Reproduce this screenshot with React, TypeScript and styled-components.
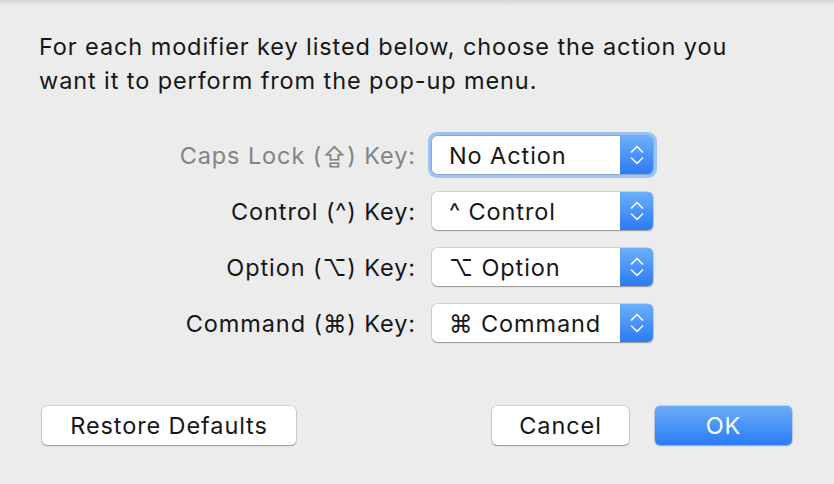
import React from "react";
import styled, { createGlobalStyle } from "styled-components";

const GlobalStyle = createGlobalStyle`
  html, body {
    margin: 0;
    padding: 0;
    background: #ececec;
  }
  body {
    font-family: Inter, "Liberation Sans", Arial, sans-serif;
    -webkit-font-smoothing: antialiased;
  }
`;

interface Modifier {
  label: string;
  value: string;
  disabled?: boolean;
  focused?: boolean;
}

const modifiers: Modifier[] = [
  { label: "Caps Lock (⇪) Key:", value: "No Action", disabled: true, focused: true },
  { label: "Control (^) Key:", value: "^ Control" },
  { label: "Option (⌥) Key:", value: "⌥ Option" },
  { label: "Command (⌘) Key:", value: "⌘ Command" },
];

const Stepper = () => (
  <svg width="14" height="24" viewBox="0 0 14 24" fill="none">
    <path d="M1.5 9 L7 3.5 L12.5 9" stroke="#fff" strokeWidth="1.5" strokeLinecap="round" strokeLinejoin="round" />
    <path d="M1.5 15 L7 20.5 L12.5 15" stroke="#fff" strokeWidth="1.5" strokeLinecap="round" strokeLinejoin="round" />
  </svg>
);

export default function App() {
  return (
    <>
      <GlobalStyle />
      <Sheet>
        <TopShade />
        <Intro>
          For each modifier key listed below, choose the action you want it to perform from the pop-up menu.
        </Intro>
        <Form>
          {modifiers.map((m) => (
            <React.Fragment key={m.label}>
              <Label $disabled={m.disabled}>{m.label}</Label>
              <PopUp $focused={m.focused}>
                <PopUpValue>{m.value}</PopUpValue>
                <Arrows>
                  <Stepper />
                </Arrows>
              </PopUp>
            </React.Fragment>
          ))}
        </Form>
        <Footer>
          <Button>Restore Defaults</Button>
          <Spacer />
          <Button $wide>Cancel</Button>
          <Button $primary $wide>OK</Button>
        </Footer>
      </Sheet>
    </>
  );
}

const Sheet = styled.div`
  width: 834px;
  height: 484px;
  background: #ececec;
  display: flex;
  flex-direction: column;
  overflow: hidden;
  font-size: 23.5px;
  letter-spacing: 0.9px;
`;

const TopShade = styled.div`
  height: 6px;
  flex-shrink: 0;
  background: linear-gradient(#d6d6d6, #ececec);
`;

const Intro = styled.p`
  margin: 24px 0 0 39px;
  max-width: 705px;
  line-height: 34px;
  color: #161616;
`;

const Form = styled.div`
  margin-top: 38px;
  padding-right: 181px;
  display: grid;
  grid-template-columns: 1fr 221px;
  column-gap: 16px;
  row-gap: 18px;
  align-items: center;
`;

const Label = styled.div<{ $disabled?: boolean }>`
  justify-self: end;
  color: ${(p) => (p.$disabled ? "#838383" : "#161616")};
`;

const PopUp = styled.div<{ $focused?: boolean }>`
  height: 38px;
  display: flex;
  align-items: stretch;
  background: #fff;
  border-radius: 5px;
  overflow: hidden;
  box-shadow: ${(p) =>
    p.$focused
      ? "0 0 0 0.5px rgba(0,0,0,0.25), 0 0 0 4px #9ec3f3"
      : "0 0 0 0.5px rgba(0,0,0,0.22), 0 1px 1.5px rgba(0,0,0,0.28)"};
`;

const PopUpValue = styled.div`
  flex: 1;
  display: flex;
  align-items: center;
  padding-left: 17px;
  color: #161616;
`;

const Arrows = styled.div`
  width: 33px;
  display: flex;
  align-items: center;
  justify-content: center;
  background: linear-gradient(#6caff8, #2a7bf6);
`;

const Footer = styled.div`
  margin-top: 64px;
  padding: 0 42px;
  display: flex;
  align-items: center;
  gap: 27px;
`;

const Spacer = styled.div`
  flex: 1;
`;

const Button = styled.div<{ $primary?: boolean; $wide?: boolean }>`
  height: 39px;
  box-sizing: border-box;
  width: ${(p) => (p.$wide ? "137px" : "254px")};
  display: flex;
  align-items: center;
  justify-content: center;
  border-radius: 5px;
  color: ${(p) => (p.$primary ? "#fff" : "#161616")};
  background: ${(p) => (p.$primary ? "linear-gradient(#6aabf8, #2b7cf6)" : "#fff")};
  box-shadow: ${(p) =>
    p.$primary
      ? "0 0 0 0.5px rgba(30,90,200,0.4), 0 1px 1.5px rgba(0,0,0,0.25)"
      : "0 0 0 0.5px rgba(0,0,0,0.22), 0 1px 1.5px rgba(0,0,0,0.28)"};
  & + & {
    margin-left: -1px;
  }
`;
